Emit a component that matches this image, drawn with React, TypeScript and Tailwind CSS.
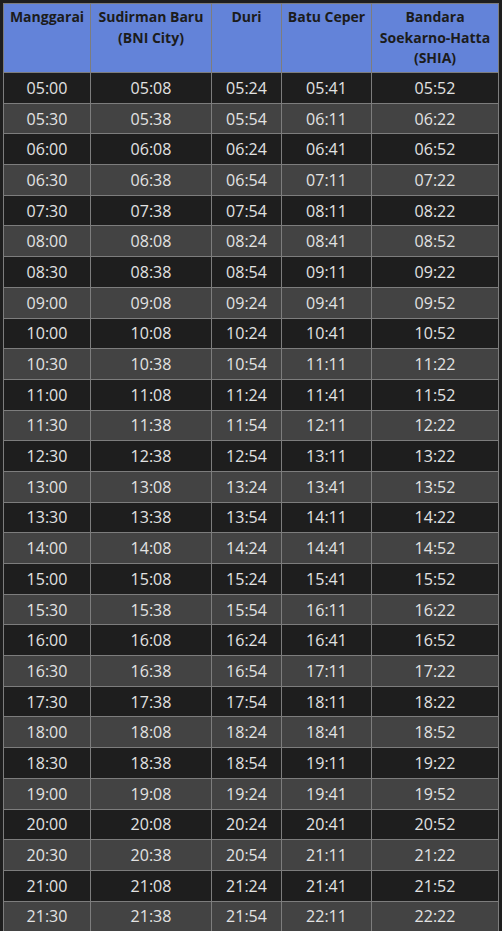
import React from 'react';

const headers = ['Manggarai', 'Sudirman Baru (BNI City)', 'Duri', 'Batu Ceper', 'Bandara Soekarno-Hatta (SHIA)'];

const rows: string[][] = [
  ['05:00', '05:08', '05:24', '05:41', '05:52'],
  ['05:30', '05:38', '05:54', '06:11', '06:22'],
  ['06:00', '06:08', '06:24', '06:41', '06:52'],
  ['06:30', '06:38', '06:54', '07:11', '07:22'],
  ['07:30', '07:38', '07:54', '08:11', '08:22'],
  ['08:00', '08:08', '08:24', '08:41', '08:52'],
  ['08:30', '08:38', '08:54', '09:11', '09:22'],
  ['09:00', '09:08', '09:24', '09:41', '09:52'],
  ['10:00', '10:08', '10:24', '10:41', '10:52'],
  ['10:30', '10:38', '10:54', '11:11', '11:22'],
  ['11:00', '11:08', '11:24', '11:41', '11:52'],
  ['11:30', '11:38', '11:54', '12:11', '12:22'],
  ['12:30', '12:38', '12:54', '13:11', '13:22'],
  ['13:00', '13:08', '13:24', '13:41', '13:52'],
  ['13:30', '13:38', '13:54', '14:11', '14:22'],
  ['14:00', '14:08', '14:24', '14:41', '14:52'],
  ['15:00', '15:08', '15:24', '15:41', '15:52'],
  ['15:30', '15:38', '15:54', '16:11', '16:22'],
  ['16:00', '16:08', '16:24', '16:41', '16:52'],
  ['16:30', '16:38', '16:54', '17:11', '17:22'],
  ['17:30', '17:38', '17:54', '18:11', '18:22'],
  ['18:00', '18:08', '18:24', '18:41', '18:52'],
  ['18:30', '18:38', '18:54', '19:11', '19:22'],
  ['19:00', '19:08', '19:24', '19:41', '19:52'],
  ['20:00', '20:08', '20:24', '20:41', '20:52'],
  ['20:30', '20:38', '20:54', '21:11', '21:22'],
  ['21:00', '21:08', '21:24', '21:41', '21:52'],
  ['21:30', '21:38', '21:54', '22:11', '22:22'],
];

const widths = ['w-[87px]', 'w-[121px]', 'w-[70px]', 'w-[90px]', 'w-[127px]'];

export default function App() {
  return (
    <div className="h-[931px] w-[502px] overflow-hidden bg-[#1e1e1e] p-[3px] font-['Open_Sans',sans-serif]">
      <table className="w-[496px] table-fixed border-collapse">
        <thead>
          <tr className="h-[69px] bg-[#6383d9]">
            {headers.map((h, i) => (
              <th
                key={h}
                className={`${widths[i]} border border-[#7d7d7d] px-1 pt-[3px] align-top text-center text-[14px] font-bold leading-[20.5px] text-[#1c1c1c]`}
              >
                {h}
              </th>
            ))}
          </tr>
        </thead>
        <tbody>
          {rows.map((r, ri) => (
            <tr key={ri} className={`h-[30.7px] ${ri % 2 === 0 ? 'bg-[#1e1e1e]' : 'bg-[#434343]'}`}>
              {r.map((c, ci) => (
                <td key={ci} className="border border-[#7d7d7d] p-0 text-center text-[16px] leading-[20px] text-[#e2e2e2]">
                  {c}
                </td>
              ))}
            </tr>
          ))}
        </tbody>
      </table>
    </div>
  );
}
